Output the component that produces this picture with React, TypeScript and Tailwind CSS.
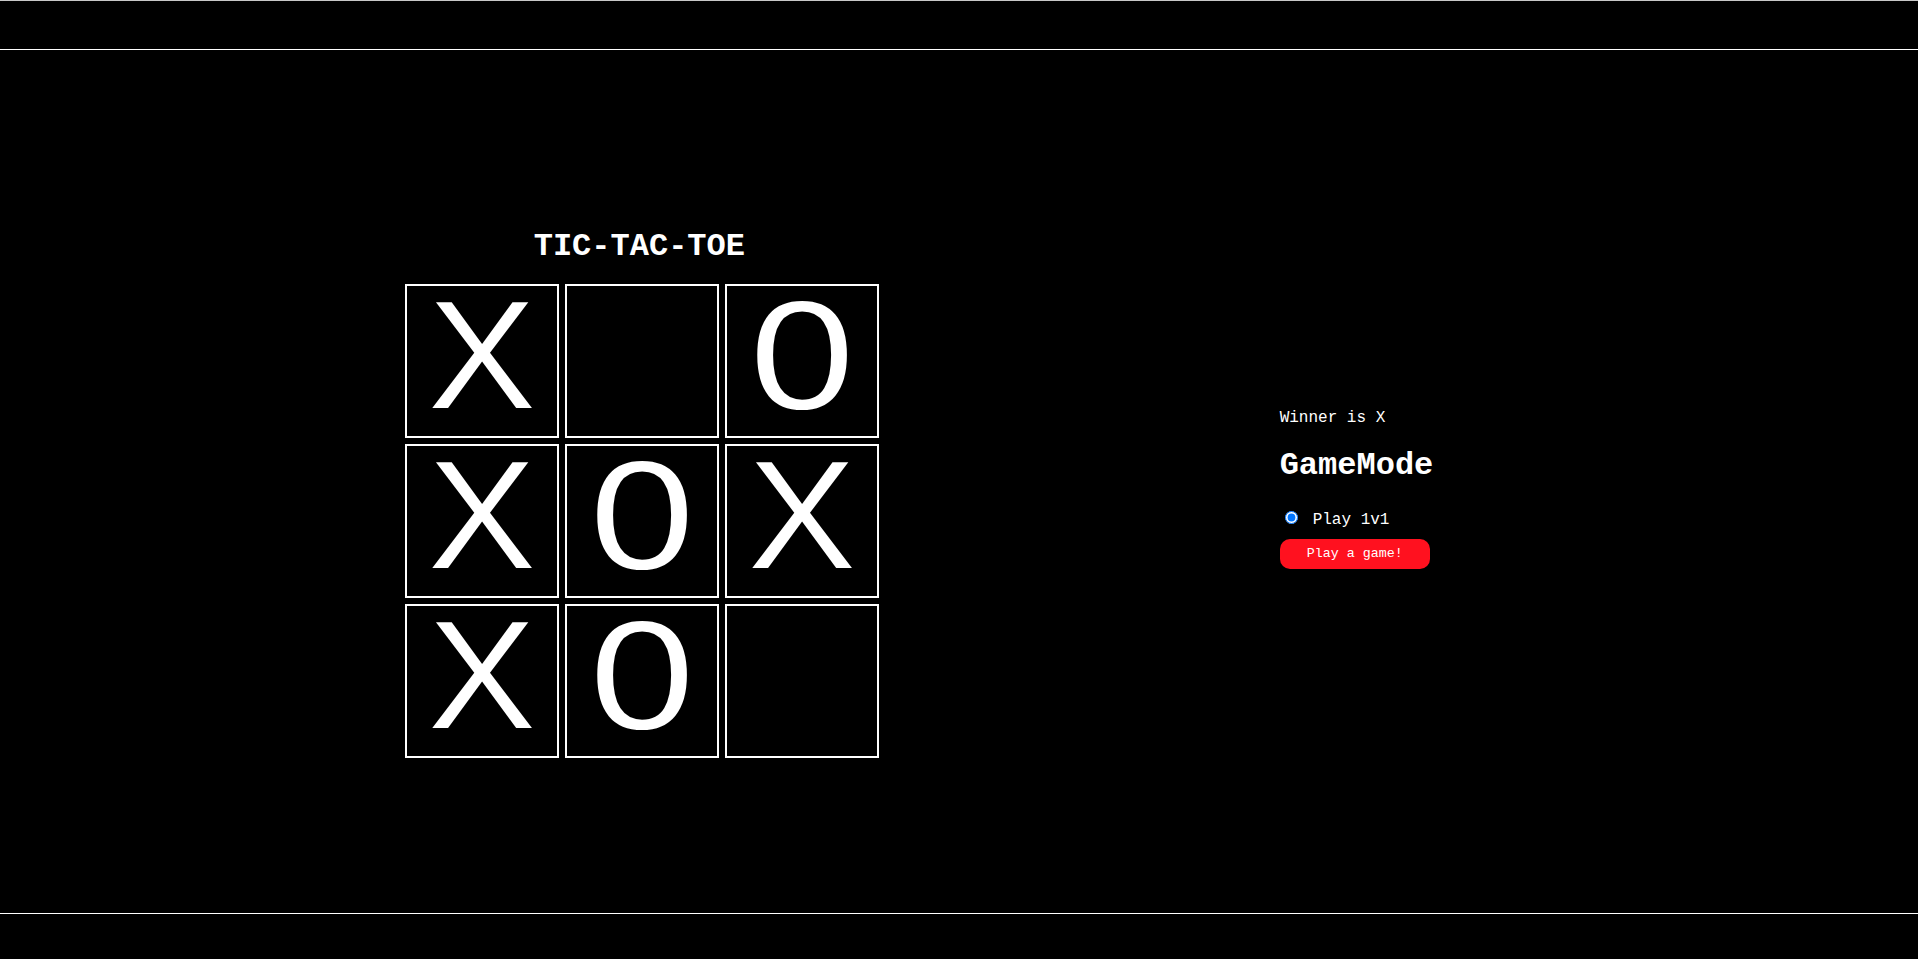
import React from 'react';

type Mark = 'X' | 'O' | null;

const board: Mark[][] = [
    ['X', null, 'O'],
    ['X', 'O', 'X'],
    ['X', 'O', null],
];

const Square: React.FC<{ value: Mark }> = ({ value }) => {
    return (
        <button className="w-[154px] h-[154px] border-2 border-white bg-black text-white flex items-center justify-center">
            <span className="block text-[164px] leading-[120px] pt-[8px] scale-x-[1.12] [-webkit-text-stroke:2px_black] font-['Liberation_Mono','Courier_New',monospace]">
                {value}
            </span>
        </button>
    );
};

const App: React.FC = () => {
    return (
        <div className="min-h-screen bg-black text-white flex flex-col font-['Liberation_Mono','Courier_New',monospace]">
            {/* Header bar */}
            <header className="h-[50px] shrink-0 border-t border-t-[#c8c8c8] border-b border-b-white" />

            <main className="h-[863px] shrink-0 grid grid-cols-3">
                {/* Game board */}
                <div className="col-span-2 flex flex-col items-center pt-[179px]">
                    <h1 className="text-[32px] leading-[36px] font-bold mb-[19px]">TIC-TAC-TOE</h1>
                    <div className="flex flex-col gap-[6px] pl-[5px]">
                        {board.map((row, r) => (
                            <div key={r} className="flex gap-[6px]">
                                {row.map((v, c) => (
                                    <Square key={c} value={v} />
                                ))}
                            </div>
                        ))}
                    </div>
                </div>

                {/* Side panel */}
                <div className="flex flex-col items-start pt-[359px] pl-[1px]">
                    <p className="text-[16px] leading-[18px]">Winner is X</p>
                    <h2 className="mt-[21px] text-[32px] leading-[36px] font-bold">GameMode</h2>
                    <label className="mt-[27px] h-[18px] flex items-start text-[16px] leading-[18px]">
                        <input type="radio" name="mode" defaultChecked className="w-[13px] h-[13px] ml-[5px] mt-0" />
                        <span className="ml-[15px]">Play 1v1</span>
                    </label>
                    <button className="mt-[10px] w-[150px] h-[30px] rounded-[10px] bg-[#ff111f] text-white text-[13.33px]">
                        Play a game!
                    </button>
                </div>
            </main>

            <footer className="h-[46px] shrink-0 border-t border-white" />
        </div>
    );
};

export default App;
